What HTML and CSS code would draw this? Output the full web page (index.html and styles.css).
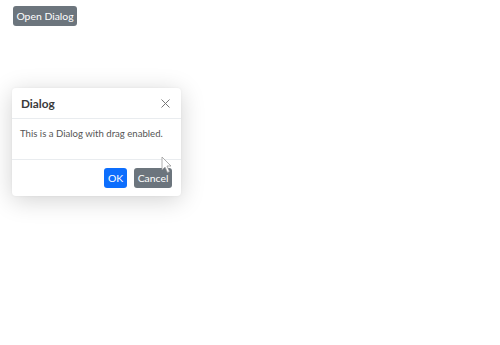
FILE: index.html
```html
<!DOCTYPE html>
<html>
<head>
<meta charset="utf-8">
<link rel="stylesheet" href="styles.css">
</head>
<body>
<div class="page">
  <div class="btn btn-secondary open-btn">Open Dialog</div>
  <div class="modal">
    <div class="modal-header">
      <span class="modal-title">Dialog</span>
      <svg class="close" width="9" height="9" viewBox="0 0 9 9"><path d="M0.5 0.5L8.5 8.5M8.5 0.5L0.5 8.5" stroke="#777" stroke-width="1"/></svg>
    </div>
    <div class="modal-body">This is a Dialog with drag enabled.</div>
    <div class="modal-footer">
      <div class="btn btn-primary ok">OK</div>
      <div class="btn btn-secondary cancel">Cancel</div>
    </div>
    <svg class="cursor" width="12" height="18" viewBox="0 0 12 18"><path d="M1 1L1 14L4 11L6.5 16.5L8.5 15.5L6 10L10 10Z" fill="#fff" stroke="#999" stroke-width="0.8"/></svg>
  </div>
</div>
</body>
</html>
```
FILE: styles.css
```css
html, body { margin: 0; padding: 0; background: #fff; }
body { font-family: "Lato", "Open Sans", sans-serif; color: #212529; }
.page { padding: 6px 13px; position: relative; height: 333px; }
.btn {
  font-size: 10.4px;
  border-radius: 3px;
  color: #fff;
  height: 20px;
  line-height: 20px;
  white-space: nowrap;
  text-align: center;
  box-sizing: border-box;
}
.btn-secondary { background: #6c757d; }
.btn-primary { background: #0d6efd; }
.open-btn { width: 64px; }
.modal {
  position: absolute;
  left: 12px;
  top: 88px;
  width: 169px;
  height: 108px;
  background: #fff;
  border-radius: 4px;
  box-shadow: 0 4px 24px rgba(0,0,0,0.18), 0 0 3px rgba(0,0,0,0.05);
  display: flex;
  flex-direction: column;
  box-sizing: border-box;
}
.modal-header {
  height: 30px;
  border-bottom: 1px solid #e9ecef;
  display: flex;
  align-items: center;
  justify-content: space-between;
  padding: 0 11px 0 9px;
  flex: none;
}
.modal-title {
  font-size: 11.8px;
  font-weight: 700;
  color: #3a3a3a;
  line-height: 14px;
  height: 13px;
  overflow: hidden;
  margin-top: 0;
}
.modal-body {
  font-size: 9.6px;
  color: #555;
  padding: 9px 8px 0;
  height: 31px;
  border-bottom: 1px solid #e9ecef;
  flex: none;
  white-space: nowrap;
}
.modal-footer {
  flex: 1;
  display: flex;
  justify-content: flex-end;
  align-items: center;
  gap: 7px;
  padding: 0 9px 0 0;
}
.ok { width: 23px; }
.cancel { width: 38px; }
.cursor { position: absolute; left: 149px; top: 68px; }
```
